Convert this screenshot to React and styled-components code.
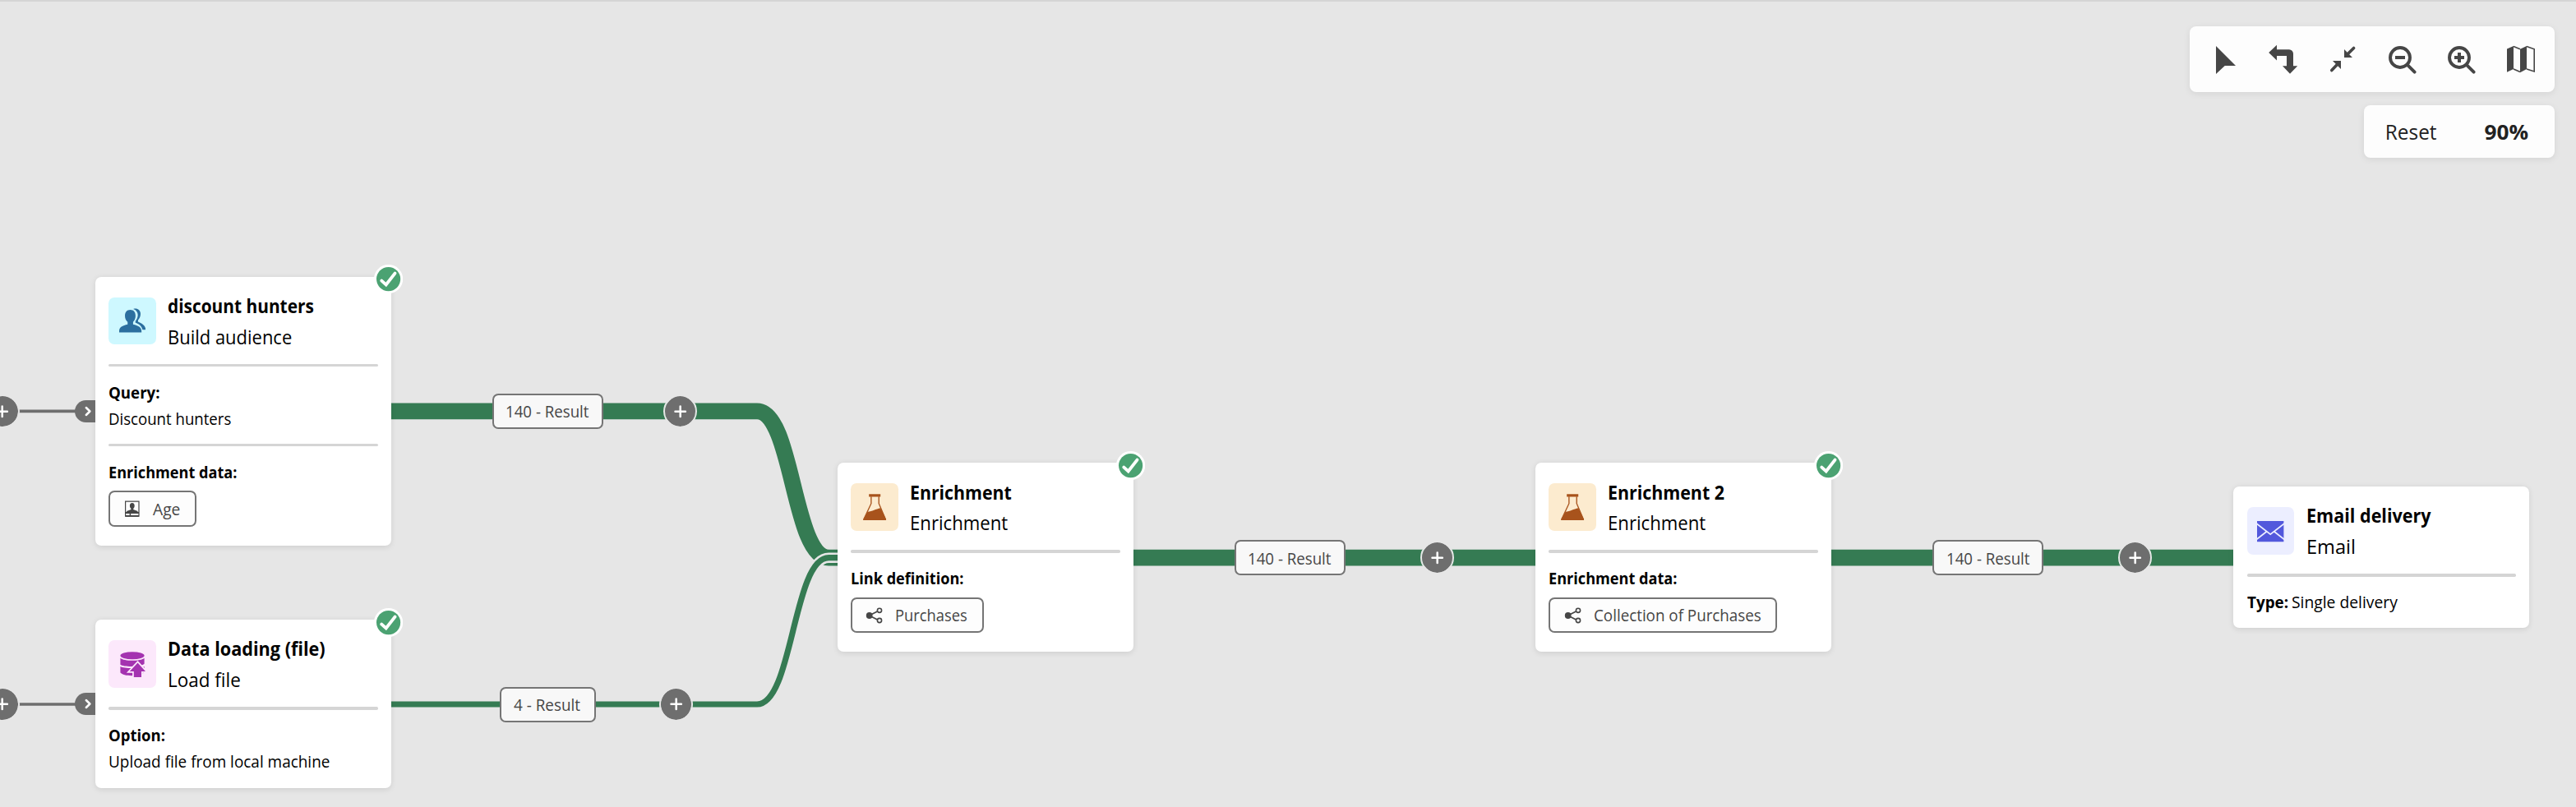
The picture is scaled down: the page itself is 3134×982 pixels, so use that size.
import React from "react";
import styled, { createGlobalStyle } from "styled-components";

const GREEN = "#357b53";
const GREY = "#6e6e6e";
const CANVAS = "#e6e6e6";

const GlobalStyle = createGlobalStyle`
  *, *::before, *::after { box-sizing: border-box; }
  html, body { margin: 0; background: ${CANVAS}; }
  body { font-family: "Open Sans", "Noto Sans", sans-serif; color: #000; }
`;

const Canvas = styled.main`
  position: relative;
  width: 3134px;
  height: 982px;
  overflow: hidden;
  background: ${CANVAS};
  border-top: 2px solid #d5d5d5;
`;

const EdgeLayer = styled.svg`
  position: absolute;
  left: 0;
  top: -2px;
  display: block;
`;

/* Floating controls */

const Controls = styled.div`
  position: relative;
  z-index: 2;
  display: flex;
  flex-direction: column;
  align-items: flex-end;
  gap: 16px;
  padding: 30px 26px 0 0;
`;

const Panel = styled.div`
  display: flex;
  align-items: center;
  background: #fdfdfd;
  border-radius: 8px;
  box-shadow: 0 2px 8px rgba(0, 0, 0, 0.08);
`;

const Toolbar = styled(Panel)`
  gap: 36px;
  height: 80px;
  padding: 0 24px;
`;

const ZoomPanel = styled(Panel)`
  justify-content: space-between;
  width: 232px;
  height: 64px;
  padding: 0 32px 0 25px;
`;

const ToolButton = styled.button`
  display: flex;
  width: 36px;
  height: 36px;
  padding: 0;
  border: 0;
  background: none;
  color: #464646;
`;

const ZoomText = styled.span`
  font-size: 25px;
  line-height: 36px;
  font-weight: ${(p) => (p.$bold ? 700 : 400)};
  color: #222;
  transform: translateX(${(p) => p.$shift || 0}px) scaleX(${(p) => p.$fit || 1});
  transform-origin: ${(p) => (p.$bold ? "right" : "left")};
`;

/* Activity nodes */

const Node = styled.article`
  position: absolute;
  left: ${(p) => p.$x}px;
  top: ${(p) => p.$y - 2}px;
  width: 360px;
  padding: 16.2px 16.2px 15.8px;
  background: #fff;
  border-radius: 7.2px;
  box-shadow: 0 1.8px 7.2px rgba(0, 0, 0, 0.1);
`;

const NodeHeader = styled.header`
  display: flex;
  align-items: center;
  gap: 14.4px;
  height: 75.2px;
`;

const IconTile = styled.div`
  display: flex;
  align-items: center;
  justify-content: center;
  width: 57.6px;
  height: 57.6px;
  border-radius: 7.2px;
  background: ${(p) => p.$bg};
`;

const Titles = styled.div`
  display: flex;
  flex-direction: column;
  align-items: flex-start;
`;

const Line = styled.span`
  display: inline-block;
  white-space: nowrap;
  font-size: ${(p) => (p.$large ? 23 : 19.6)}px;
  line-height: ${(p) => (p.$large ? 37.6 : 32.4)}px;
  font-weight: ${(p) => (p.$bold ? 700 : 400)};
  transform: translateY(1.2px) scaleX(${(p) => p.$fit || 1});
  transform-origin: left;
`;

const Divider = styled.hr`
  height: 3.6px;
  margin: 14.4px 0;
  border: 0;
  border-radius: 1.8px;
  background: #d5d5d5;
`;

const Section = styled.section`
  display: flex;
  flex-direction: ${(p) => (p.$inline ? "row" : "column")};
  align-items: flex-start;
  gap: ${(p) => (p.$inline ? 2.4 : 0)}px;
`;

const Chip = styled.span`
  display: flex;
  align-items: center;
  gap: 14.4px;
  width: ${(p) => p.$w}px;
  height: 43.2px;
  margin: 7.2px 0;
  padding-left: 16.2px;
  border: 2px solid #757575;
  border-radius: 7.2px;
  background: #fdfdfd;
  color: #464646;
`;

const Status = styled.div`
  position: absolute;
  right: -14px;
  top: -14.4px;
  width: 35.2px;
  height: 35.2px;
`;

const InPort = styled.div`
  position: absolute;
  right: 100%;
  top: ${(p) => p.$top}px;
  width: 25.2px;
  height: 27px;
  border-radius: 13.5px 0 0 13.5px;
  background: ${GREY};
`;

/* Controls that sit on the edges */

const EdgeLabel = styled.div`
  position: absolute;
  left: ${(p) => p.$x}px;
  top: ${(p) => p.$y - 23.4}px;
  display: flex;
  align-items: center;
  width: ${(p) => p.$w}px;
  height: 43.2px;
  padding-left: 14.8px;
  border: 2px solid #757575;
  border-radius: 7.2px;
  background: #f8f8f8;
  color: #464646;
`;

const AddButton = styled.button`
  position: absolute;
  left: ${(p) => p.$x - 20.7}px;
  top: ${(p) => p.$y - 22.7}px;
  width: 41.4px;
  height: 41.4px;
  padding: 0;
  border: 2px solid ${CANVAS};
  border-radius: 50%;
  background: ${GREY};
  background-clip: padding-box;
  svg { display: block; }
`;

/* Icons */

const Icon = ({ size = 36, children, ...rest }) => (
  <svg width={size} height={size} viewBox="0 0 36 36" fill="currentColor" {...rest}>
    {children}
  </svg>
);

const PointerIcon = () => (
  <Icon><path d="M8 2.1V36L18.8 26H32Z" /></Icon>
);

const OrientationIcon = () => (
  <Icon overflow="visible">
    <path d="M10 .8.2 10 10 19.4V14H22V26.3H17L26 35.8 35.2 26.3H30V11.3A5 5 0 0 0 25 6.2H10Z" />
  </Icon>
);

const FitIcon = () => (
  <Icon>
    <path d="M20 6v10h10zM16 30V20H6z" />
    <path d="M25 11l6.6-6.6M11 25l-6.200 6.600" stroke="currentColor" strokeWidth="3.6" strokeLinecap="round" />
  </Icon>
);

const MagnifierIcon = ({ plus }) => (
  <Icon fill="none" stroke="currentColor" strokeWidth="3.9">
    <circle cx="16" cy="16" r="12" />
    <path d="M24.8 24.8L33.6 33.6" strokeLinecap="round" />
    <path d={plus ? "M10 16H22M16 10V22" : "M10 16H22"} strokeWidth="4" />
  </Icon>
);

const MapIcon = () => (
  <Icon>
    <path d="M2 5.6 10 2V30L2 33.8ZM18 5.8 26 2V30L18 34.2Z" />
    <path d="M10 2.6 18 5.8M10 30 18 33.6M26 2.6 35.2 5.8V33L26 30" fill="none" stroke="currentColor" strokeWidth="1.6" />
  </Icon>
);

const AudienceIcon = () => (
  <Icon size={32.4} color="#2c6f9f">
    <path d="M0 34v-2c0-5 4.5-7.7 11.4-9v-3.2C9 17.8 7.8 15 7.8 11.5 7.8 6.500 10.500 3.400 15 3.400s7.100 3.100 7.100 8.100c0 3.500-1.200 6.300-3.300 8.300V23C25.500 24.300 30.200 27 30.200 32v2Z" />
    <path d="M19 2.200C24 .500 28.900 3.400 28.900 9c0 3.500-1.500 6.300-3.400 8.300v2.200C31 22 35.800 24.800 35.800 30.400H31.600C30.600 25.400 26.500 22 22 20.800V18.600C24 16.200 25.200 13.600 25.200 10.400 25.200 6.400 22.500 3.400 19 2.200Z" />
  </Icon>
);

const DatabaseUploadIcon = () => (
  <Icon size={32.4} color="#a433b0">
    <ellipse cx="17.8" cy="6.400" rx="16.200" ry="5.100" />
    <path d="M1.600 9.600C6 14.200 29.600 14.200 34 9.600V17.500C29 22 6 22 1.600 18.500ZM1.600 21.200C6 24.400 29.600 24.400 34 21.200V29C28 35 6 35 1.600 29.500Z" />
    <path d="M25 16.100 35.700 27.800H30V35.800H19.800V27.800H14.200Z" stroke="#fce8fb" strokeWidth="3.800" />
    <path d="M25 16.100 35.700 27.800H30V35.800H19.800V27.800H14.200Z" />
  </Icon>
);

const FlaskIcon = () => (
  <Icon size={32.4} color="#a8531c">
    <path d="M10.200.3H25.800V3.900H10.200Z" />
    <path d="M13.200 3.500V13L3.300 34.200Q3 35.400 4.200 35.400H31.700Q33 35.400 32.600 34.200L23.600 13V3.500" fill="none" stroke="currentColor" strokeWidth="1.500" />
    <path d="M8.500 24.300C15 23.800 19 20.500 25.800 19.200L33 33.500Q33.600 36 31.500 36H4.300Q2.200 36 2.700 34Z" />
  </Icon>
);

const MailIcon = () => (
  <Icon size={32.4} color="#5258dc">
    <path d="M0 4.400H36V32.400H0Z" />
    <path d="M-1 7.700 18 22.400 37 7.700M13 18.700-1 29.500M23 18.700 37 29.500" fill="none" stroke="#eceeff" strokeWidth="2" />
  </Icon>
);

const ShareIcon = () => (
  <svg width="21.6" height="21.6" viewBox="0 0 21.600 21.600" fill="none" stroke="currentColor" strokeWidth="1.600">
    <path d="M4.500 11 14.400 6M4.500 11 14.400 16" strokeWidth="1.800" />
    <circle cx="4.700" cy="11" r="3.900" fill="currentColor" stroke="none" />
    <circle cx="17" cy="4.800" r="2.600" />
    <circle cx="17" cy="17" r="2.600" />
  </svg>
);

const ProfileIcon = () => (
  <svg width="21.6" height="21.6" viewBox="0 0 21.600 21.600" fill="currentColor">
    <path d="M2.600 2.200H19V20.200H2.600Z" fill="none" stroke="currentColor" strokeWidth="1.200" />
    <path d="M10.800 4C12.800 4 13.700 5.500 13.700 7.300 13.700 9 13 10.200 12.200 10.900V12.100L17.500 14.100V15.800H4.100V14.100L9.400 12.100V10.900C8.600 10.200 7.900 9 7.900 7.300 7.900 5.500 8.800 4 10.800 4Z" />
    <path d="M2.600 15H19V17H2.600ZM7.600 17H9.200V20H7.600ZM2.600 19H19V20.800H2.600Z" />
  </svg>
);

const DoneBadge = () => (
  <Status>
    <svg width="35.2" height="35.2" viewBox="-17.600 -17.600 35.200 35.200">
      <circle r="17.600" fill="#fff" />
      <circle r="14.600" fill="#4ba272" />
      <path d="M-8.300 2 -2.900 6.800 7.900-7" fill="none" stroke="#fff" strokeWidth="3.900" strokeLinecap="round" />
    </svg>
  </Status>
);

const Port = ({ top }) => (
  <InPort $top={top}>
    <svg width="25.2" height="27" viewBox="0 0 25.200 27">
      <path d="M13.800 9 18.400 13.500 13.800 18" fill="none" stroke="#fff" strokeWidth="2.500" strokeLinecap="round" strokeLinejoin="round" />
    </svg>
  </InPort>
);

const Add = ({ x, y }) => (
  <AddButton $x={x} $y={y} aria-label="Add activity">
    <svg width="37.4" height="37.4" viewBox="-18.700 -18.700 37.400 37.400">
      <path d="M-6.200 0H6.200M0-6.200V6.200" stroke="#fff" strokeWidth="2.500" strokeLinecap="round" />
    </svg>
  </AddButton>
);

const Edge = ({ d, width, color = GREEN }) => (
  <g fill="none">
    <path d={d} stroke={CANVAS} strokeWidth={width + 5.400} />
    <path d={d} stroke={color} strokeWidth={width} />
  </g>
);

const Header = ({ icon, bg, title, titleFit, kind, kindFit }) => (
  <NodeHeader>
    <IconTile $bg={bg}>{icon}</IconTile>
    <Titles>
      <Line $large $bold $fit={titleFit}>{title}</Line>
      <Line $large $fit={kindFit}>{kind}</Line>
    </Titles>
  </NodeHeader>
);

const ORANGE_TILE = "#fcebcf";

export default function App() {
  return (
    <>
      <GlobalStyle />
      <Canvas>
        <EdgeLayer width="3134" height="982" viewBox="0 0 3134 982">
          <Edge d="M0 500.400H92" width={3.600} color={GREY} />
          <Edge d="M0 857H92" width={3.600} color={GREY} />
          <Edge d="M476 500.400H921C964.700 500.400 964.700 678.700 1008.300 678.700H1019" width={19.800} />
          <Edge d="M476 857H921C964.700 857 964.700 678.700 1008.300 678.700H1019" width={7.200} />
          <Edge d="M1379 678.700H1868" width={19.800} />
          <Edge d="M2228 678.700H2718" width={19.800} />
        </EdgeLayer>

        <Add x={3} y={500.6} />
        <Add x={3} y={857} />

        <EdgeLabel $x={598.7} $y={500.4} $w={135.4}><Line $fit={0.953}>140 - Result</Line></EdgeLabel>
        <Add x={827.3} y={500.5} />
        <EdgeLabel $x={608} $y={857} $w={117.4}><Line $fit={0.963}>4 - Result</Line></EdgeLabel>
        <Add x={822.7} y={857} />
        <EdgeLabel $x={1501.7} $y={678.6} $w={135.4}><Line $fit={0.953}>140 - Result</Line></EdgeLabel>
        <Add x={1748.7} y={678.8} />
        <EdgeLabel $x={2351} $y={678.6} $w={135.4}><Line $fit={0.953}>140 - Result</Line></EdgeLabel>
        <Add x={2597.7} y={678.8} />

        <Node $x={116} $y={336.8}>
          <Port top={150.1} />
          <DoneBadge />
          <Header icon={<AudienceIcon />} bg="#cef8ff" title="discount hunters" titleFit={0.907} kind="Build audience" kindFit={0.955} />
          <Divider />
          <Section>
            <Line $bold $fit={0.952}>Query:</Line>
            <Line $fit={0.95}>Discount hunters</Line>
          </Section>
          <Divider />
          <Section>
            <Line $bold $fit={0.925}>Enrichment data:</Line>
            <Chip $w={106.8}><ProfileIcon /><Line $fit={0.98}>Age</Line></Chip>
          </Section>
        </Node>

        <Node $x={116} $y={754.2}>
          <Port top={89.3} />
          <DoneBadge />
          <Header icon={<DatabaseUploadIcon />} bg="#fce8fb" title="Data loading (file)" titleFit={0.941} kind="Load file" kindFit={0.977} />
          <Divider />
          <Section>
            <Line $bold $fit={0.944}>Option:</Line>
            <Line $fit={0.967}>Upload file from local machine</Line>
          </Section>
        </Node>

        <Node $x={1019} $y={563.4}>
          <DoneBadge />
          <Header icon={<FlaskIcon />} bg={ORANGE_TILE} title="Enrichment" titleFit={0.926} kind="Enrichment" kindFit={0.963} />
          <Divider />
          <Section>
            <Line $bold $fit={0.925}>Link definition:</Line>
            <Chip $w={162}><ShareIcon /><Line $fit={0.936}>Purchases</Line></Chip>
          </Section>
        </Node>

        <Node $x={1868.2} $y={563.4}>
          <DoneBadge />
          <Header icon={<FlaskIcon />} bg={ORANGE_TILE} title="Enrichment 2" titleFit={0.929} kind="Enrichment" kindFit={0.963} />
          <Divider />
          <Section>
            <Line $bold $fit={0.925}>Enrichment data:</Line>
            <Chip $w={277.2}><ShareIcon /><Line $fit={0.959}>Collection of Purchases</Line></Chip>
          </Section>
        </Node>

        <Node $x={2717.4} $y={592.2}>
          <Header icon={<MailIcon />} bg="#eceeff" title="Email delivery" titleFit={0.937} kind="Email" kindFit={1.025} />
          <Divider />
          <Section $inline>
            <Line $bold $fit={0.962}>Type:</Line>
            <Line $fit={0.984}>Single delivery</Line>
          </Section>
        </Node>

        <Controls>
          <Toolbar>
            <ToolButton aria-label="Select"><PointerIcon /></ToolButton>
            <ToolButton aria-label="Change orientation"><OrientationIcon /></ToolButton>
            <ToolButton aria-label="Fit to screen"><FitIcon /></ToolButton>
            <ToolButton aria-label="Zoom out"><MagnifierIcon /></ToolButton>
            <ToolButton aria-label="Zoom in"><MagnifierIcon plus /></ToolButton>
            <ToolButton aria-label="Toggle map"><MapIcon /></ToolButton>
          </Toolbar>
          <ZoomPanel>
            <ZoomText $shift={0.8} $fit={0.975}>Reset</ZoomText>
            <ZoomText $bold $fit={1.048}>90%</ZoomText>
          </ZoomPanel>
        </Controls>
      </Canvas>
    </>
  );
}
